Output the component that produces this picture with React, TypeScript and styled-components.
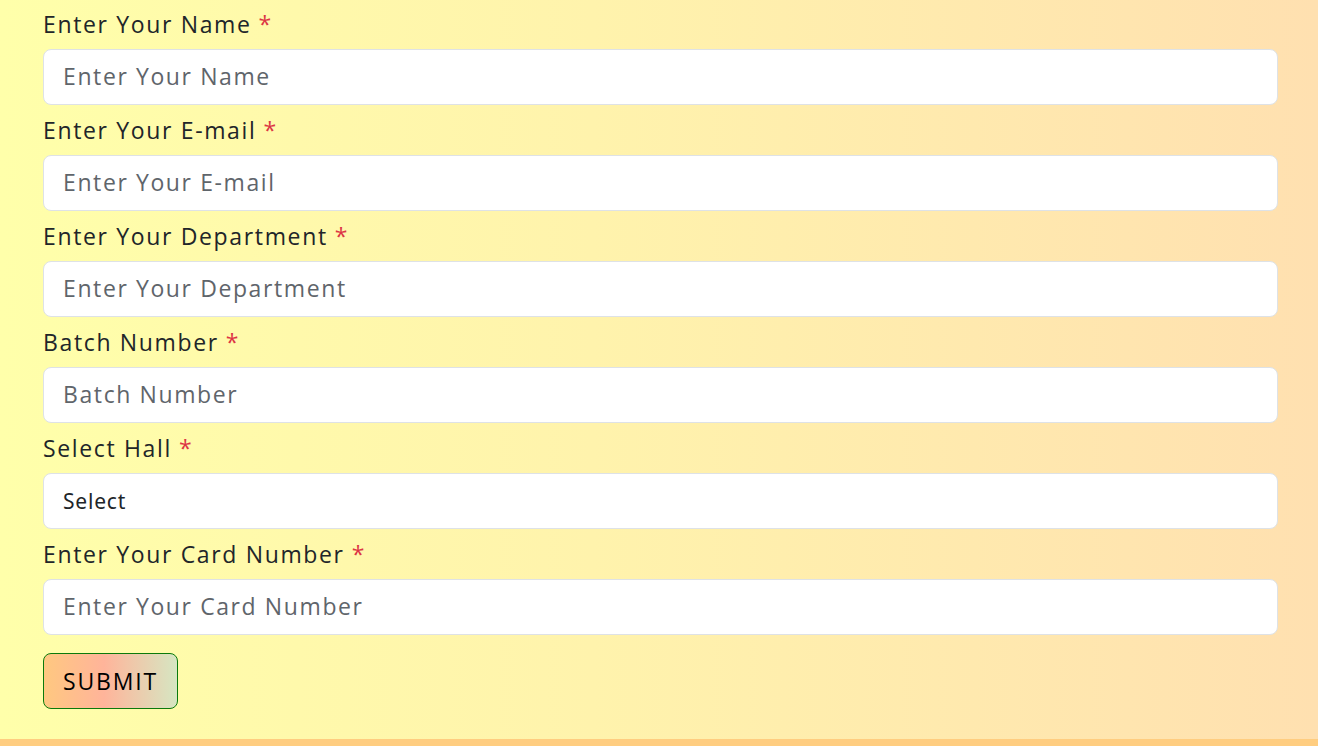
import React from "react";
import styled, { createGlobalStyle } from "styled-components";

const Global = createGlobalStyle`
  html, body { margin: 0; padding: 0; }
  body {
    font-family: "Open Sans", "Noto Sans", sans-serif;
    background: #ffcd80;
  }
`;

const Page = styled.div`
  width: 1318px;
  height: 739px;
  overflow: hidden;
  background: linear-gradient(90deg, #ffffaa 0%, #fff3ac 45%, #ffe0b0 100%);
  box-sizing: border-box;
  padding: 8px 40px 0 43px;
`;

const Form = styled.form`
  display: flex;
  flex-direction: column;
  width: 1235px;
`;

const Group = styled.div`
  display: flex;
  flex-direction: column;
  margin-bottom: 9px;
`;

const Label = styled.label`
  font-size: 23px;
  line-height: 32px;
  height: 33px;
  margin-bottom: 8px;
  color: #212529;
  letter-spacing: 1.65px;
`;

const Star = styled.span`
  color: #dc3545;
  margin-left: 7px;
  letter-spacing: 0;
`;

const Input = styled.input`
  box-sizing: border-box;
  height: 56px;
  width: 100%;
  border: 1px solid #dee2e6;
  border-radius: 8px;
  background: #fff;
  padding: 0 19px 2px;
  font-family: "Open Sans", "Noto Sans", sans-serif;
  font-size: 23px;
  letter-spacing: 1.6px;
  color: #212529;
  outline: none;
  &::placeholder { color: #5f656b; }
`;

const Select = styled.select`
  box-sizing: border-box;
  height: 56px;
  width: 100%;
  border: 1px solid #dee2e6;
  border-radius: 8px;
  background: #fff;
  padding: 0 18px 0 19px;
  font-family: "Noto Sans", sans-serif;
  font-size: 21px;
  letter-spacing: 0.8px;
  color: #212529;
  appearance: none;
  outline: none;
`;

const Submit = styled.button`
  align-self: flex-start;
  margin-top: 9px;
  height: 56px;
  width: 135px;
  box-sizing: border-box;
  border: 1px solid #0b7a0b;
  border-radius: 8px;
  background: linear-gradient(90deg, #ffc880 0%, #ffb49a 45%, #d6e6c2 100%);
  font-family: "Open Sans", "Noto Sans", sans-serif;
  font-size: 23px;
  letter-spacing: 1.8px;
  color: #000;
  padding: 0;
`;

const fields = [
  { label: "Enter Your Name", ph: "Enter Your Name" },
  { label: "Enter Your E-mail", ph: "Enter Your E-mail" },
  { label: "Enter Your Department", ph: "Enter Your Department" },
  { label: "Batch Number", ph: "Batch Number" },
];

export default function App() {
  return (
    <>
      <Global />
      <Page>
        <Form onSubmit={(e) => e.preventDefault()}>
          {fields.map((f) => (
            <Group key={f.label}>
              <Label>
                {f.label}
                <Star>*</Star>
              </Label>
              <Input placeholder={f.ph} />
            </Group>
          ))}
          <Group>
            <Label>
              Select Hall<Star>*</Star>
            </Label>
            <Select defaultValue="">
              <option value="">Select</option>
            </Select>
          </Group>
          <Group>
            <Label>
              Enter Your Card Number<Star>*</Star>
            </Label>
            <Input placeholder="Enter Your Card Number" />
          </Group>
          <Submit type="submit">SUBMIT</Submit>
        </Form>
      </Page>
    </>
  );
}
